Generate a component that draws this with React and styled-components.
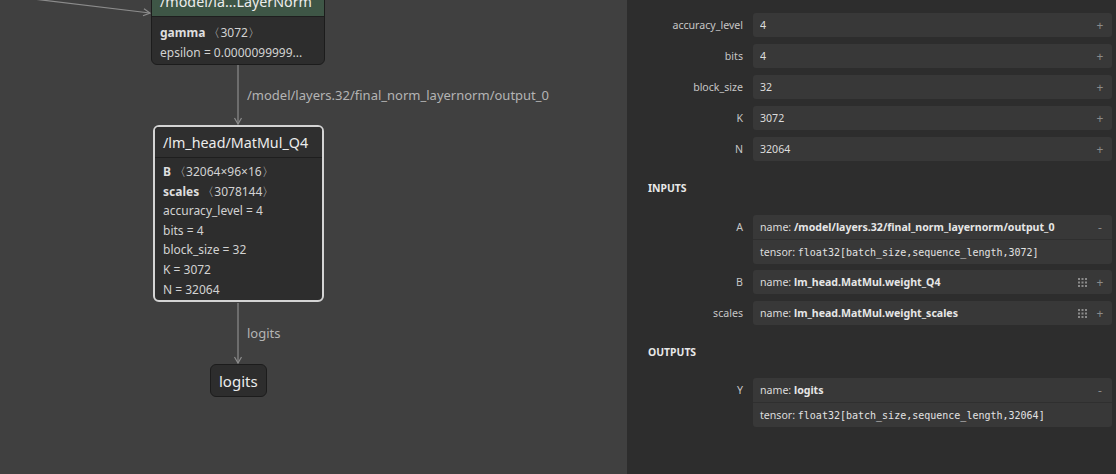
import React from 'react';
import styled, { createGlobalStyle } from 'styled-components';

const GlobalStyle = createGlobalStyle`
  html, body {
    margin: 0;
    padding: 0;
    background: #404040;
  }
  body {
    font-family: "Noto Sans", "Open Sans", sans-serif;
  }
`;

const Page = styled.div`
  width: 1116px;
  height: 474px;
  display: flex;
  overflow: hidden;
`;

const GraphPane = styled.div`
  position: relative;
  flex: 1;
  background: #404040;
  overflow: hidden;
`;

const Edges = styled.svg`
  position: absolute;
  left: 0;
  top: 0;
  width: 100%;
  height: 100%;
  pointer-events: none;
`;

const EdgeLabel = styled.div`
  position: absolute;
  left: ${p => p.$x}px;
  top: ${p => p.$y}px;
  font-size: 13px;
  line-height: 16px;
  color: #b4b4b4;
  white-space: nowrap;
`;

const Node = styled.div`
  position: absolute;
  left: ${p => p.$x}px;
  top: ${p => p.$y}px;
  width: ${p => p.$w}px;
  box-sizing: border-box;
  border: ${p => (p.$selected ? '2px solid #d4d4d4' : '1px solid #1c1c1c')};
  border-radius: 6px;
  background: #2d2d2d;
  overflow: hidden;
`;

const NodeHeader = styled.div`
  height: ${p => p.$h}px;
  display: flex;
  align-items: center;
  padding: 0 8px;
  background: ${p => p.$color || '#2f2f2f'};
  border-bottom: 1px solid #1e1e1e;
  color: #ececec;
  font-size: 14.3px;
  white-space: nowrap;
`;

const NodeBody = styled.div`
  padding: ${p => p.$pad || '4px 0 1px'};
  display: flex;
  flex-direction: column;
`;

const NodeRow = styled.div`
  padding: 0 8px;
  font-size: 12px;
  line-height: 19.6px;
  color: #d2d2d2;
  white-space: nowrap;
  b {
    font-weight: 700;
    color: #dedede;
  }
`;

const Terminal = styled.div`
  position: absolute;
  left: ${p => p.$x}px;
  top: ${p => p.$y}px;
  box-sizing: border-box;
  height: 33px;
  padding: 0 8px;
  display: flex;
  align-items: center;
  border: 1px solid #1c1c1c;
  border-radius: 6px;
  background: #2d2d2d;
  color: #ececec;
  font-size: 15px;
`;

const Sidebar = styled.div`
  width: 489px;
  background: #2d2d2d;
  box-sizing: border-box;
  padding: 13px 4px 0 21px;
  display: flex;
  flex-direction: column;
`;

const List = styled.div`
  display: flex;
  flex-direction: column;
  gap: 6px;
`;

const Row = styled.div`
  display: grid;
  grid-template-columns: 95px 1fr;
  column-gap: 10px;
  align-items: start;
`;

const Label = styled.div`
  text-align: right;
  font-size: 10.6px;
  line-height: 25px;
  color: #c6c6c6;
  white-space: nowrap;
`;

const ValueBox = styled.div`
  background: #383838;
  border-radius: 3px;
  display: flex;
  flex-direction: column;
`;

const ValueLine = styled.div`
  height: 24px;
  display: flex;
  align-items: center;
  padding: 0 7px;
  font-size: 10.6px;
  color: #dcdcdc;
  white-space: nowrap;
  & + & {
    border-top: 1px solid #2f2f2f;
  }
  b {
    font-weight: 700;
    color: #e6e6e6;
  }
`;

const Grow = styled.span`
  flex: 1;
  overflow: hidden;
`;

const Mono = styled.span`
  font-family: "DejaVu Sans Mono", "Liberation Mono", monospace;
  font-size: 10px;
  color: #e2e2e2;
`;

const Toggle = styled.span`
  width: 10px;
  text-align: center;
  font-size: 12px;
  color: #8a8a8a;
  margin-left: 8px;
`;

const Heading = styled.div`
  margin: ${p => p.$m};
  font-size: 10.4px;
  line-height: 14px;
  font-weight: 700;
  color: #e8e8e8;
`;

const DotsIcon = () => (
  <svg width="9" height="9" viewBox="0 0 9 9">
    {[0, 3.5, 7].map(y =>
      [0, 3.5, 7].map(x => <rect key={`${x}-${y}`} x={x} y={y} width="2" height="2" fill="#8a8a8a" />)
    )}
  </svg>
);

const Arrow = ({ x, y, dir = 'down' }) => {
  const d =
    dir === 'down'
      ? `M${x - 3.5},${y - 6} L${x},${y} L${x + 3.5},${y - 6}`
      : `M${x - 6},${y - 4.3} L${x},${y} L${x - 7},${y + 2.7}`;
  return <path d={d} stroke="#8c8c8c" strokeWidth="1.2" fill="none" />;
};

const attributes = [
  ['accuracy_level', '4'],
  ['bits', '4'],
  ['block_size', '32'],
  ['K', '3072'],
  ['N', '32064'],
];

const Attr = ({ name, value }) => (
  <Row>
    <Label>{name}</Label>
    <ValueBox>
      <ValueLine>
        <Grow>{value}</Grow>
        <Toggle>+</Toggle>
      </ValueLine>
    </ValueBox>
  </Row>
);

const Arg = ({ label, name, tensor, initializer }) => (
  <Row>
    <Label>{label}</Label>
    <ValueBox>
      <ValueLine>
        <Grow>
          name: <b>{name}</b>
        </Grow>
        {initializer && <DotsIcon />}
        <Toggle>{tensor ? '-' : '+'}</Toggle>
      </ValueLine>
      {tensor && (
        <ValueLine>
          tensor:&nbsp;<Mono>{tensor}</Mono>
        </ValueLine>
      )}
    </ValueBox>
  </Row>
);

export default function App() {
  return (
    <>
      <GlobalStyle />
      <Page>
        <GraphPane>
          <Edges>
            <line x1="0" y1="-5" x2="150" y2="13" stroke="#8c8c8c" strokeWidth="1.2" />
            <Arrow x={150} y={13} dir="right" />
            <line x1="238" y1="63" x2="238" y2="124" stroke="#8c8c8c" strokeWidth="1.2" />
            <Arrow x={238} y={124} />
            <line x1="238" y1="303" x2="238" y2="363" stroke="#8c8c8c" strokeWidth="1.2" />
            <Arrow x={238} y={363} />
          </Edges>

          <Node $x={151} $y={-15} $w={174}>
            <NodeHeader $h={30} $color="#3e5646">/model/la...LayerNorm</NodeHeader>
            <NodeBody $pad="6px 0 2px">
              <NodeRow>
                <b>gamma</b> 〈3072〉
              </NodeRow>
              <NodeRow>epsilon = 0.0000099999...</NodeRow>
            </NodeBody>
          </Node>

          <EdgeLabel $x={247} $y={87}>/model/layers.32/final_norm_layernorm/output_0</EdgeLabel>

          <Node $x={153} $y={125} $w={171} $selected>
            <NodeHeader $h={30}>/lm_head/MatMul_Q4</NodeHeader>
            <NodeBody>
              <NodeRow>
                <b>B</b> 〈32064×96×16〉
              </NodeRow>
              <NodeRow>
                <b>scales</b> 〈3078144〉
              </NodeRow>
              <NodeRow>accuracy_level = 4</NodeRow>
              <NodeRow>bits = 4</NodeRow>
              <NodeRow>block_size = 32</NodeRow>
              <NodeRow>K = 3072</NodeRow>
              <NodeRow>N = 32064</NodeRow>
            </NodeBody>
          </Node>

          <EdgeLabel $x={247} $y={325}>logits</EdgeLabel>

          <Terminal $x={210} $y={364}>logits</Terminal>
        </GraphPane>

        <Sidebar>
          <List>
            {attributes.map(([n, v]) => (
              <Attr key={n} name={n} value={v} />
            ))}
          </List>

          <Heading $m="19px 0 20px">INPUTS</Heading>
          <List>
            <Arg
              label="A"
              name="/model/layers.32/final_norm_layernorm/output_0"
              tensor="float32[batch_size,sequence_length,3072]"
            />
            <Arg label="B" name="lm_head.MatMul.weight_Q4" initializer />
            <Arg label="scales" name="lm_head.MatMul.weight_scales" initializer />
          </List>

          <Heading $m="19px 0 19px">OUTPUTS</Heading>
          <List>
            <Arg label="Y" name="logits" tensor="float32[batch_size,sequence_length,32064]" />
          </List>
        </Sidebar>
      </Page>
    </>
  );
}
